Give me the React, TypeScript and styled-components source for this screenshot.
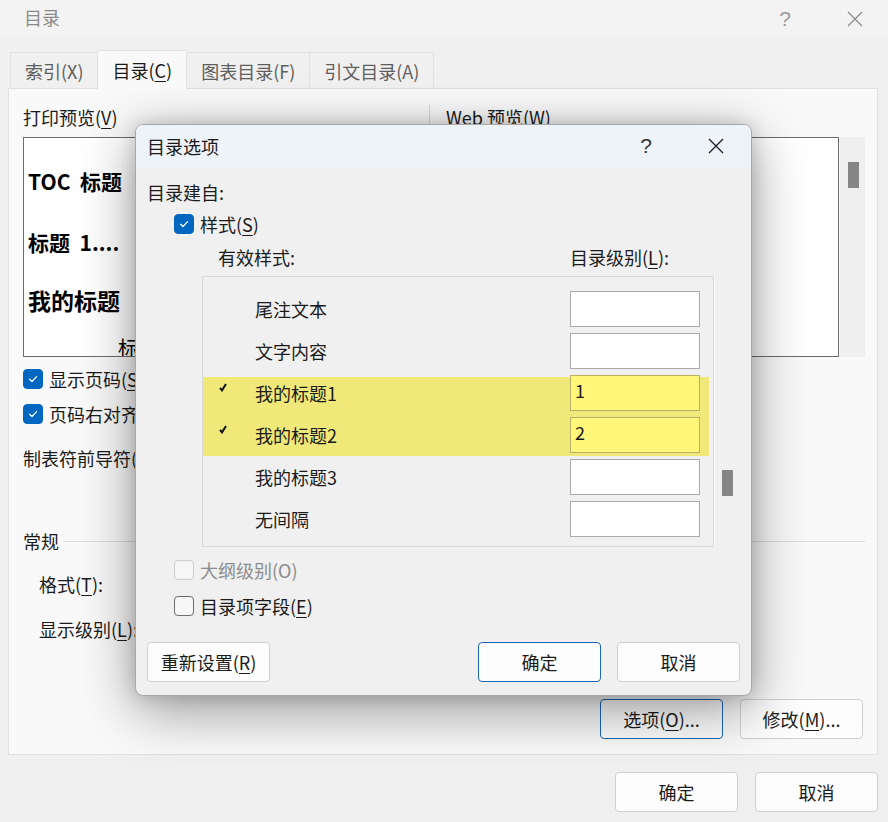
import React from 'react';
import styled, { createGlobalStyle } from 'styled-components';

const GlobalStyle = createGlobalStyle`
  html, body {
    margin: 0;
    padding: 0;
  }
  body {
    width: 888px;
    height: 822px;
    overflow: hidden;
    background: #f0f0f0;
    font-family: "Noto Sans CJK SC", "Noto Sans", sans-serif;
    font-size: 18px;
    line-height: 24px;
    color: #1b1b1b;
  }
`;

type Style = { name: string; level?: string; marked?: boolean };

const styles: Style[] = [
  { name: '尾注文本' },
  { name: '文字内容' },
  { name: '我的标题1', level: '1', marked: true },
  { name: '我的标题2', level: '2', marked: true },
  { name: '我的标题3' },
  { name: '无间隔' },
];

const CloseIcon = ({ color }: { color: string }) => (
  <svg width="16" height="16" viewBox="0 0 16 16">
    <path d="M1 1 L15 15 M15 1 L1 15" stroke={color} strokeWidth="1.3" fill="none" />
  </svg>
);

const TickIcon = () => (
  <svg width="12" height="12" viewBox="0 0 12 12">
    <path d="M2.6 6.2 L5 8.5 L9.6 3.6" stroke="#fff" strokeWidth="1.2" fill="none" strokeLinecap="round" strokeLinejoin="round" />
  </svg>
);

const RowMark = () => (
  <svg width="8" height="9" viewBox="0 0 8 9">
    <path d="M1 4.8 L3 7.4 L7 1" stroke="#111" strokeWidth="2" fill="none" />
  </svg>
);

const Box = ({ checked, disabled }: { checked?: boolean; disabled?: boolean }) => (
  <CheckBox $checked={checked} $disabled={disabled}>
    {checked && <TickIcon />}
  </CheckBox>
);

const App = () => {
  return (
    <>
      <GlobalStyle />
      <Window>
        <TitleBar>
          <WindowTitle>目录</WindowTitle>
          <TitleButtons>
            <TitleButton $muted>?</TitleButton>
            <TitleButton $muted><CloseIcon color="#8c8c8c" /></TitleButton>
          </TitleButtons>
        </TitleBar>

        <Main>
          <TabBar>
            <Tab>索引(X)</Tab>
            <Tab $active>目录(<Key>C</Key>)</Tab>
            <Tab>图表目录(F)</Tab>
            <Tab>引文目录(A)</Tab>
          </TabBar>

          <Panel>
            <PreviewRow>
              <LeftCol>
                <PaneLabel>打印预览(<Key>V</Key>)</PaneLabel>
                <PrintBox>
                  <PreviewLine $size={21} $top={28} $bold>TOC&nbsp;&nbsp;标题</PreviewLine>
                  <PreviewLine $size={21} $top={31} $bold>标题&nbsp;&nbsp;1....</PreviewLine>
                  <PreviewLine $size={23} $top={28} $bold>我的标题</PreviewLine>
                  <PreviewLine $size={20} $top={18} $indent={90}>标题</PreviewLine>
                </PrintBox>
              </LeftCol>
              <Divider />
              <RightCol>
                <PaneLabel>Web 预览(<Key>W</Key>)</PaneLabel>
                <WebRow>
                  <WebBox />
                  <ScrollTrack>
                    <Thumb $top={25} />
                  </ScrollTrack>
                </WebRow>
              </RightCol>
            </PreviewRow>

            <CheckRow $top={10}>
              <Box checked />
              <span>显示页码(<Key>S</Key>)</span>
            </CheckRow>
            <CheckRow $top={11}>
              <Box checked />
              <span>页码右对齐(<Key>R</Key>)</span>
            </CheckRow>
            <FieldLabel $top={20}>制表符前导符(<Key>B</Key>):</FieldLabel>

            <GroupHeader>
              <span>常规</span>
              <GroupLine />
            </GroupHeader>
            <FieldLabel $top={19} $indent={16}>格式(<Key>T</Key>):</FieldLabel>
            <FieldLabel $top={21} $indent={16}>显示级别(<Key>L</Key>):</FieldLabel>

            <PanelButtons>
              <Button $focused>选项(<Key>O</Key>)...</Button>
              <Button>修改(<Key>M</Key>)...</Button>
            </PanelButtons>
          </Panel>

          <Footer>
            <Button>确定</Button>
            <Button>取消</Button>
          </Footer>
        </Main>

        <Dialog>
          <DialogTitleBar>
            <DialogTitle>目录选项</DialogTitle>
            <TitleButtons>
              <TitleButton>?</TitleButton>
              <TitleButton><CloseIcon color="#1b1b1b" /></TitleButton>
            </TitleButtons>
          </DialogTitleBar>

          <DialogBody>
            <FieldLabel $top={12}>目录建自:</FieldLabel>
            <CheckRow $top={8} $indent={27}>
              <Box checked />
              <span>样式(<Key>S</Key>)</span>
            </CheckRow>
            <ColumnHeads>
              <span>有效样式:</span>
              <span>目录级别(<Key>L</Key>):</span>
            </ColumnHeads>

            <ListArea>
              <StyleList>
                {styles.map((s, i) => (
                  <StyleRow
                    key={s.name}
                    $hl={!!s.marked}
                    $first={!!s.marked && !styles[i - 1]?.marked}
                  >
                    <MarkCell>{s.marked && <RowMark />}</MarkCell>
                    <StyleName>{s.name}</StyleName>
                    <LevelInput $hl={!!s.marked}>{s.level}</LevelInput>
                  </StyleRow>
                ))}
              </StyleList>
              <ListScroll>
                <Thumb $top={194} />
              </ListScroll>
            </ListArea>

            <CheckRow $top={11} $indent={27} $disabled>
              <Box disabled />
              <span>大纲级别(O)</span>
            </CheckRow>
            <CheckRow $top={12} $indent={27}>
              <Box />
              <span>目录项字段(<Key>E</Key>)</span>
            </CheckRow>

            <DialogFooter>
              <Button>重新设置(<Key>R</Key>)</Button>
              <Spacer />
              <Button $focused>确定</Button>
              <Button>取消</Button>
            </DialogFooter>
          </DialogBody>
        </Dialog>
      </Window>
    </>
  );
};

export default App;

const Window = styled.div`
  position: relative;
  width: 888px;
  height: 822px;
  background: #f0f0f0;
  overflow: hidden;
`;

const TitleBar = styled.div`
  display: flex;
  align-items: center;
  height: 37px;
  padding: 0 10px 0 24px;
  background: #f3f3f3;
`;

const WindowTitle = styled.div`
  flex: 1;
  margin-top: -3px;
  color: #8a8a8a;
`;

const TitleButtons = styled.div`
  display: flex;
  gap: 24px;
`;

const TitleButton = styled.div<{ $muted?: boolean }>`
  width: 46px;
  height: 30px;
  display: flex;
  align-items: center;
  justify-content: center;
  font-family: "Liberation Sans", sans-serif;
  font-size: 21px;
  color: ${p => (p.$muted ? '#9a9a9a' : '#333')};
`;

const Key = styled.span`
  text-decoration: underline;
  text-underline-offset: 3px;
  text-decoration-thickness: 1px;
`;

const Main = styled.div`
  padding: 13px 10px 0 8px;
`;

const TabBar = styled.div`
  display: flex;
  align-items: flex-end;
  height: 38px;
  padding-left: 2px;
`;

const Tab = styled.div<{ $active?: boolean }>`
  position: relative;
  z-index: ${p => (p.$active ? 1 : 0)};
  box-sizing: border-box;
  height: ${p => (p.$active ? 39 : 36)}px;
  margin-bottom: ${p => (p.$active ? -1 : 0)}px;
  margin-right: -1px;
  padding: 0 14px;
  display: flex;
  align-items: center;
  border: 1px solid #e1e1e1;
  border-bottom: none;
  background: ${p => (p.$active ? '#f9f9f9' : '#f0f0f0')};
  color: ${p => (p.$active ? '#1b1b1b' : '#5e5e5e')};
`;

const Panel = styled.div`
  box-sizing: border-box;
  height: 667px;
  border: 1px solid #e0e0e0;
  background: #f9f9f9;
  padding: 16px 12px 0 14px;
`;

const PreviewRow = styled.div`
  display: flex;
  height: 252px;
`;

const LeftCol = styled.div`
  width: 406px;
  display: flex;
  flex-direction: column;
`;

const RightCol = styled.div`
  padding-left: 16px;
  display: flex;
  flex-direction: column;
`;

const PaneLabel = styled.div`
  height: 26px;
`;

const Divider = styled.div`
  width: 1px;
  background: #d6d6d6;
`;

const PrintBox = styled.div`
  box-sizing: border-box;
  width: 390px;
  height: 220px;
  margin-top: 6px;
  padding-left: 4px;
  border: 1px solid #6b6b6b;
  background: #fff;
  overflow: hidden;
`;

const PreviewLine = styled.div<{ $size: number; $top: number; $bold?: boolean; $indent?: number }>`
  margin-top: ${p => p.$top}px;
  padding-left: ${p => p.$indent ?? 0}px;
  font-size: ${p => p.$size}px;
  line-height: 30px;
  font-weight: ${p => (p.$bold ? 700 : 400)};
  color: #000;
  white-space: nowrap;
`;

const WebRow = styled.div`
  display: flex;
  margin-top: 6px;
  height: 220px;
`;

const WebBox = styled.div`
  box-sizing: border-box;
  width: 393px;
  height: 220px;
  border: 1px solid #6b6b6b;
  background: #fff;
`;

const ScrollTrack = styled.div`
  width: 25px;
  margin-left: 1px;
  background: #efefef;
`;

const Thumb = styled.div<{ $top: number }>`
  width: 11px;
  height: 26px;
  margin: ${p => p.$top}px 0 0 8px;
  background: #858585;
`;

const CheckRow = styled.div<{ $top: number; $indent?: number; $disabled?: boolean }>`
  display: flex;
  align-items: center;
  gap: 6px;
  height: 24px;
  margin-top: ${p => p.$top}px;
  padding-left: ${p => p.$indent ?? 0}px;
  color: ${p => (p.$disabled ? '#8c8c8c' : '#1b1b1b')};
  white-space: nowrap;
`;

const CheckBox = styled.span<{ $checked?: boolean; $disabled?: boolean }>`
  box-sizing: border-box;
  width: 20px;
  height: 20px;
  border-radius: 4px;
  display: flex;
  align-items: center;
  justify-content: center;
  background: ${p => (p.$checked ? '#0067c0' : p.$disabled ? '#f6f6f6' : '#f7f7f7')};
  border: 1px solid ${p => (p.$checked ? '#0067c0' : p.$disabled ? '#cbcbcb' : '#6e6e6e')};
`;

const FieldLabel = styled.div<{ $top: number; $indent?: number }>`
  margin-top: ${p => p.$top}px;
  padding-left: ${p => p.$indent ?? 0}px;
  white-space: nowrap;
`;

const GroupHeader = styled.div`
  display: flex;
  align-items: center;
  gap: 4px;
  margin-top: 59px;
`;

const GroupLine = styled.div`
  flex: 1;
  height: 1px;
  background: #dadada;
`;

const PanelButtons = styled.div`
  display: flex;
  justify-content: flex-end;
  gap: 17px;
  margin-top: 58px;
  margin-right: 2px;
`;

const Button = styled.div<{ $focused?: boolean }>`
  box-sizing: border-box;
  width: 123px;
  height: 40px;
  display: flex;
  align-items: center;
  justify-content: center;
  border-radius: 4px;
  border: 1px solid ${p => (p.$focused ? '#1a67b5' : '#d0d0d0')};
  background: #fdfdfd;
  color: #1b1b1b;
  white-space: nowrap;
`;

const Footer = styled.div`
  display: flex;
  justify-content: flex-end;
  gap: 17px;
  margin-top: 17px;
`;

const Dialog = styled.div`
  position: absolute;
  left: 135px;
  top: 124px;
  width: 617px;
  height: 572px;
  box-sizing: border-box;
  border: 1px solid #a8a8a8;
  border-radius: 8px;
  background: #f0f0f0;
  overflow: hidden;
  display: flex;
  flex-direction: column;
  box-shadow: 0 14px 56px rgba(0, 0, 0, 0.4), 0 0 18px rgba(0, 0, 0, 0.16);
`;

const DialogTitleBar = styled.div`
  display: flex;
  align-items: center;
  height: 43px;
  padding: 0 12px 2px 11px;
  box-sizing: border-box;
  background: #eef2f9;
`;

const DialogTitle = styled.div`
  flex: 1;
`;

const DialogBody = styled.div`
  flex: 1;
  display: flex;
  flex-direction: column;
  padding: 0 11px 13px 11px;
`;

const ColumnHeads = styled.div`
  display: grid;
  grid-template-columns: 352px auto;
  margin-top: 9px;
  padding-left: 71px;
`;

const ListArea = styled.div`
  display: flex;
  margin-top: 7px;
  margin-left: 55px;
`;

const StyleList = styled.div`
  box-sizing: border-box;
  width: 512px;
  height: 271px;
  padding-top: 11px;
  border: 1px solid #d8d8d8;
  background: #f0f0f0;
  box-shadow: 1px 0 0 #fbfbfb;
`;

const StyleRow = styled.div<{ $hl: boolean; $first: boolean }>`
  display: flex;
  align-items: center;
  height: 42px;
  margin-right: 4px;
  background: ${p =>
    !p.$hl ? 'transparent' : p.$first ? 'linear-gradient(to bottom, transparent 5px, #f0e878 5px)' : '#f0e878'};
`;

const MarkCell = styled.div`
  align-self: flex-start;
  box-sizing: border-box;
  width: 52px;
  height: 42px;
  padding: 11px 0 0 16px;

  svg {
    display: block;
  }
`;

const StyleName = styled.div`
  flex: 1;
  white-space: nowrap;
`;

const LevelInput = styled.div<{ $hl: boolean }>`
  box-sizing: border-box;
  width: 130px;
  height: 36px;
  margin-right: 9px;
  padding: 0 0 6px 4px;
  display: flex;
  align-items: center;
  border: 1px solid ${p => (p.$hl ? '#b8b064' : '#ababab')};
  background: ${p => (p.$hl ? '#fff67a' : '#fff')};
  font-size: 18px;
`;

const ListScroll = styled.div`
  width: 26px;
`;

const DialogFooter = styled.div`
  display: flex;
  gap: 16px;
  margin-top: auto;
`;

const Spacer = styled.div`
  flex: 1;
`;
